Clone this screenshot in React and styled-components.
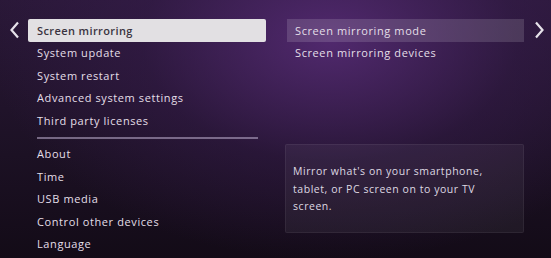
import styled, { createGlobalStyle } from "styled-components";

const leftTop = [
  "Screen mirroring",
  "System update",
  "System restart",
  "Advanced system settings",
  "Third party licenses",
];
const leftBottom = ["About", "Time", "USB media", "Control other devices", "Language"];
const rightItems = ["Screen mirroring mode", "Screen mirroring devices"];

const GlobalStyle = createGlobalStyle`
  html, body {
    margin: 0;
    padding: 0;
    background: #150d1a;
  }
`;

const App = () => {
  return (
    <>
      <GlobalStyle />
      <Screen>
        <Arrow>
          <svg width="11" height="18" viewBox="0 0 11 18">
            <path d="M9 1.5 L2.5 9 L9 16.5" fill="none" stroke="#e6e2ea" strokeWidth="2.2" />
          </svg>
        </Arrow>
        <LeftMenu>
          {leftTop.map((label, i) => (
            <Item key={label} selected={i === 0}>
              {label}
            </Item>
          ))}
          <Divider />
          {leftBottom.map((label) => (
            <Item key={label}>{label}</Item>
          ))}
        </LeftMenu>
        <RightPane>
          {rightItems.map((label, i) => (
            <SubItem key={label} focused={i === 0}>
              {label}
            </SubItem>
          ))}
          <Description>
            Mirror what's on your smartphone, tablet, or PC screen on to your TV screen.
          </Description>
        </RightPane>
        <Arrow>
          <svg width="11" height="18" viewBox="0 0 11 18">
            <path d="M2 1.5 L8.5 9 L2 16.5" fill="none" stroke="#e6e2ea" strokeWidth="2.2" />
          </svg>
        </Arrow>
      </Screen>
    </>
  );
};

export default App;

const Screen = styled.div`
  width: 551px;
  height: 258px;
  overflow: hidden;
  box-sizing: border-box;
  display: flex;
  align-items: flex-start;
  padding: 19px 0 0 7px;
  font-family: "Open Sans", "Noto Sans", sans-serif;
  background:
    radial-gradient(ellipse 340px 220px at 330px 40px, rgba(88, 44, 120, 0.85), rgba(60, 30, 85, 0.4) 55%, rgba(20, 12, 26, 0) 100%),
    linear-gradient(180deg, #2a1838 0%, #1c1124 60%, #130b17 100%);
`;

const Arrow = styled.div`
  width: 14px;
  height: 22px;
  display: flex;
  align-items: center;
  justify-content: center;
  flex-shrink: 0;
  margin: 0 4px 0 0;
  &:last-child {
    margin: 0 0 0 8px;
  }
`;

const LeftMenu = styled.div`
  width: 238px;
  display: flex;
  flex-direction: column;
  margin-left: 3px;
`;

const Item = styled.div`
  height: 22.5px;
  display: flex;
  align-items: center;
  padding-left: 9px;
  font-size: 11px;
  letter-spacing: ${(p) => (p.selected ? "0.4px" : "0.6px")};
  white-space: nowrap;
  color: ${(p) => (p.selected ? "#3a3340" : "#e4dfe8")};
  font-weight: ${(p) => (p.selected ? 600 : 400)};
  background: ${(p) => (p.selected ? "#e2e0e3" : "transparent")};
  border-radius: ${(p) => (p.selected ? "2px" : "0")};
`;

const Divider = styled.div`
  height: 2px;
  margin: 5px 8px 4px 9px;
  background: rgba(190, 175, 205, 0.55);
`;

const RightPane = styled.div`
  width: 237px;
  margin-left: 21px;
  display: flex;
  flex-direction: column;
`;

const SubItem = styled.div`
  height: 22.5px;
  display: flex;
  align-items: center;
  padding-left: 8px;
  font-size: 11px;
  letter-spacing: 0.6px;
  white-space: nowrap;
  color: #e4dfe8;
  background: ${(p) => (p.focused ? "rgba(255, 255, 255, 0.14)" : "transparent")};
`;

const Description = styled.div`
  margin: 80px 0 0 -2px;
  width: 239px;
  height: 89px;
  box-sizing: border-box;
  padding: 18px 30px 0 7px;
  font-size: 10.5px;
  line-height: 17.5px;
  letter-spacing: 0.55px;
  color: #ded8e2;
  background: rgba(255, 255, 255, 0.05);
  border: 1px solid rgba(255, 255, 255, 0.06);
  border-radius: 2px;
`;
